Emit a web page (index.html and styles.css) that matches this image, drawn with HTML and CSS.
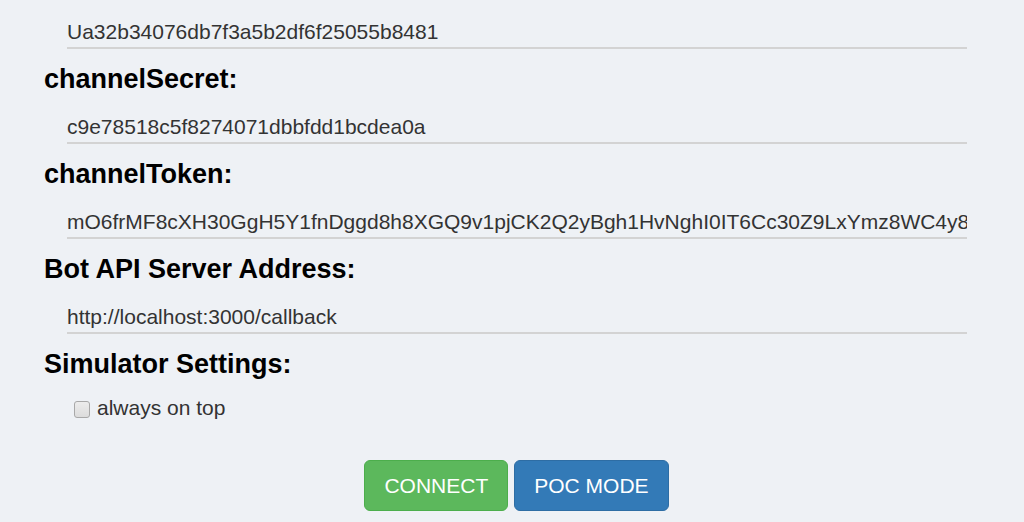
FILE: index.html
```html
<!DOCTYPE html>
<html>
<head>
<meta charset="utf-8">
<link rel="stylesheet" href="styles.css">
</head>
<body>
<div class="page">
  <input class="field" type="text" value="Ua32b34076db7f3a5b2df6f25055b8481">
  <h4 class="label">channelSecret:</h4>
  <input class="field" type="text" value="c9e78518c5f8274071dbbfdd1bcdea0a">
  <h4 class="label">channelToken:</h4>
  <input class="field" type="text" value="mO6frMF8cXH30GgH5Y1fnDggd8h8XGQ9v1pjCK2Q2yBgh1HvNghI0IT6Cc30Z9LxYmz8WC4y8aKpRJhkV3gJ7sK">
  <h4 class="label">Bot API Server Address:</h4>
  <input class="field" type="text" value="http://localhost:3000/callback">
  <h4 class="label">Simulator Settings:</h4>
  <label class="check"><input class="box" type="checkbox"><span>always on top</span></label>
  <div class="actions">
    <button class="btn btn-green">CONNECT</button>
    <button class="btn btn-blue">POC MODE</button>
  </div>
</div>
</body>
</html>
```
FILE: styles.css
```css
html, body {
  margin: 0;
  padding: 0;
  background: #eef1f5;
  font-family: "Liberation Sans", Arial, sans-serif;
  color: #333;
}
.page {
  padding: 13px 0 0 44px;
  width: 923px;
  display: flex;
  flex-direction: column;
  align-items: flex-start;
}
.field {
  display: block;
  box-sizing: border-box;
  margin: 0 0 0 23px;
  width: 900px;
  height: 36px;
  padding: 4px 0 0 0;
  border: none;
  border-bottom: 2px solid #d3d3d3;
  background: transparent;
  font-family: "Liberation Sans", Arial, sans-serif;
  font-size: 21px;
  color: #333;
  outline: none;
}
.label {
  margin: 0;
  height: 59px;
  line-height: 61px;
  font-size: 27px;
  font-weight: bold;
  color: #000;
}
.check {
  display: flex;
  align-items: center;
  margin: 0 0 0 30px;
  height: 30px;
  font-size: 21px;
  color: #333;
}
.box {
  -webkit-appearance: none;
  appearance: none;
  box-sizing: border-box;
  width: 16px;
  height: 17px;
  margin: 2px 7px 0 0;
  border: 1px solid #a8a8a8;
  border-radius: 3px;
  background: linear-gradient(#ececec, #dcdcdc);
}
.actions {
  align-self: stretch;
  display: flex;
  justify-content: center;
  gap: 6px;
  margin-top: 37px;
  padding-left: 22px;
}
.btn {
  font-family: "Liberation Sans", Arial, sans-serif;
  font-size: 21px;
  color: #fff;
  height: 51px;
  padding: 0 19px;
  border-radius: 6px;
  border: 1.5px solid;
  cursor: pointer;
}
.btn-green {
  background: #5cb85c;
  border-color: #4cae4c;
}
.btn-blue {
  background: #337ab7;
  border-color: #2e6da4;
}
```
